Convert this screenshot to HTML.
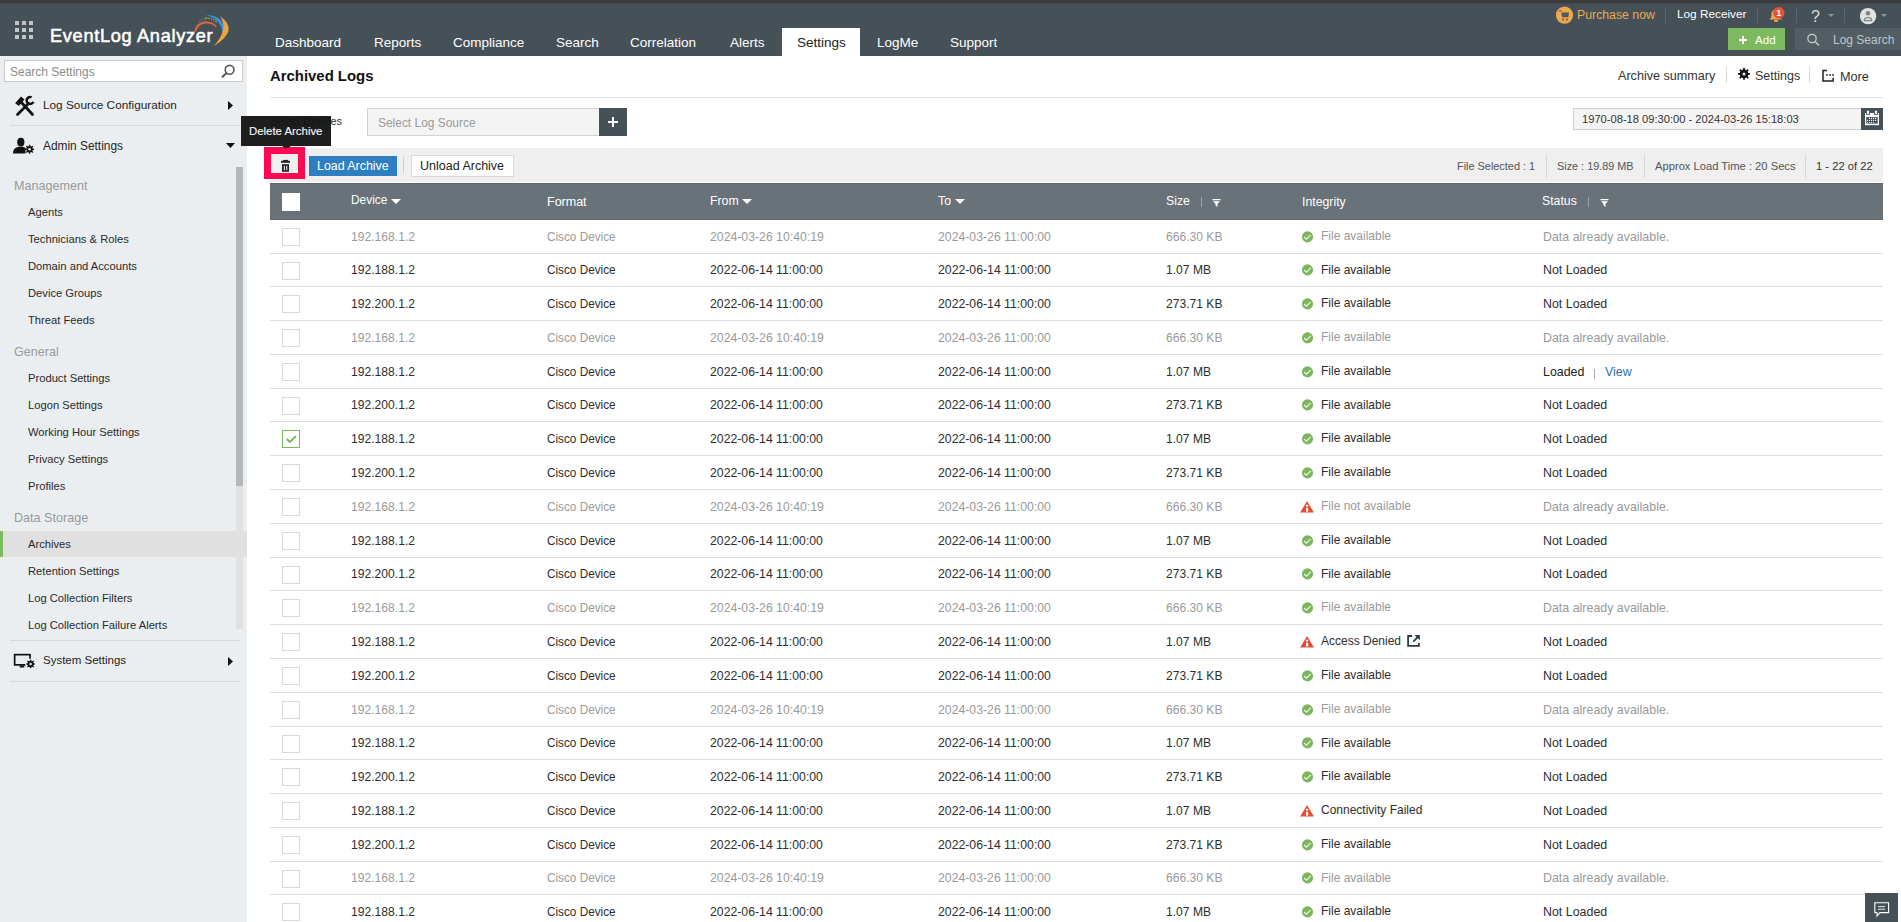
<!DOCTYPE html>
<html><head><meta charset="utf-8"><title>Archived Logs</title>
<style>
*{margin:0;padding:0;box-sizing:border-box}
html,body{width:1901px;height:922px;overflow:hidden}
body{position:relative;font-family:"Liberation Sans", sans-serif;background:#fff;color:#222}
.a{position:absolute;white-space:nowrap;line-height:1}
svg.a{overflow:visible}
</style></head><body>
<div class="a" style="left:0px;top:0px;width:1901px;height:3px;background:#3b3b3b;"></div>
<div class="a" style="left:0px;top:3px;width:1901px;height:53px;background:#465057;"></div>
<div class="a" style="left:0px;top:3px;width:1901px;height:1px;background:#42484c;"></div>
<div class="a" style="left:15px;top:21px;width:4px;height:4px;background:#c1c5c8;"></div>
<div class="a" style="left:15px;top:28px;width:4px;height:4px;background:#c1c5c8;"></div>
<div class="a" style="left:15px;top:35px;width:4px;height:4px;background:#c1c5c8;"></div>
<div class="a" style="left:22px;top:21px;width:4px;height:4px;background:#c1c5c8;"></div>
<div class="a" style="left:22px;top:28px;width:4px;height:4px;background:#c1c5c8;"></div>
<div class="a" style="left:22px;top:35px;width:4px;height:4px;background:#c1c5c8;"></div>
<div class="a" style="left:29px;top:21px;width:4px;height:4px;background:#c1c5c8;"></div>
<div class="a" style="left:29px;top:28px;width:4px;height:4px;background:#c1c5c8;"></div>
<div class="a" style="left:29px;top:35px;width:4px;height:4px;background:#c1c5c8;"></div>
<div class="a" style="left:50px;top:26.59px;font-size:18.2px;color:#ffffff;font-weight:normal;letter-spacing:0.68px;-webkit-text-stroke:0.55px #fff">EventLog Analyzer</div>
<svg class="a" style="left:185px;top:8px;" width="50" height="44" viewBox="0 0 50 44"><path d="M9 23.5 Q11 13.5 21 13.2 Q28.5 13.5 31.8 18.5 L30.8 19.5 Q27.5 15.5 21 15.6 Q13 16 10.8 24 Z" fill="#d9663f"/><path d="M13 14 Q17 10 23 9.8" fill="none" stroke="#6b7378" stroke-width="0.8"/><path d="M20.3 10.3 Q28 9.8 32.5 15" fill="none" stroke="#8bc34a" stroke-width="1.3" stroke-dasharray="1.3 1.4"/><path d="M21 7 Q44 8 37.5 30 Q39 12 21 7 Z" fill="#3b93d8"/><path d="M35 8.3 Q55 22 29 38 Q44 21 35 8.3 Z" fill="#eaa644"/></svg>
<div class="a" style="left:782px;top:28px;width:78px;height:28px;background:#ffffff;"></div>
<div class="a" style="left:275px;top:35.57px;font-size:13.5px;color:#ffffff;font-weight:normal;">Dashboard</div>
<div class="a" style="left:374px;top:35.57px;font-size:13.5px;color:#ffffff;font-weight:normal;">Reports</div>
<div class="a" style="left:453px;top:35.57px;font-size:13.5px;color:#ffffff;font-weight:normal;">Compliance</div>
<div class="a" style="left:556px;top:35.57px;font-size:13.5px;color:#ffffff;font-weight:normal;">Search</div>
<div class="a" style="left:630px;top:35.57px;font-size:13.5px;color:#ffffff;font-weight:normal;">Correlation</div>
<div class="a" style="left:730px;top:35.57px;font-size:13.5px;color:#ffffff;font-weight:normal;">Alerts</div>
<div class="a" style="left:797px;top:35.57px;font-size:13.5px;color:#222;font-weight:normal;">Settings</div>
<div class="a" style="left:877px;top:35.57px;font-size:13.5px;color:#ffffff;font-weight:normal;">LogMe</div>
<div class="a" style="left:950px;top:35.57px;font-size:13.5px;color:#ffffff;font-weight:normal;">Support</div>
<svg class="a" style="left:1556px;top:6.3px;" width="18" height="18" viewBox="0 0 18 18"><circle cx="8.5" cy="9.1" r="8.65" fill="#e8a94f"/><rect x="3" y="4.5" width="2.8" height="0.9" fill="#465057"/><path d="M5.3 6.6 H12.9 L12.3 11.3 H6.2 Z" fill="#4f5960"/><rect x="6.1" y="12.7" width="1.7" height="1.7" fill="#8a4a30"/><rect x="10" y="12.7" width="1.7" height="1.7" fill="#8a4a30"/></svg>
<div class="a" style="left:1577px;top:8.59px;font-size:12.3px;color:#e8a94f;font-weight:normal;">Purchase now</div>
<div class="a" style="left:1665px;top:7px;width:1px;height:16px;background:#5a646b;"></div>
<div class="a" style="left:1757px;top:7px;width:1px;height:16px;background:#5a646b;"></div>
<div class="a" style="left:1796px;top:7px;width:1px;height:16px;background:#5a646b;"></div>
<div class="a" style="left:1844px;top:7px;width:1px;height:16px;background:#5a646b;"></div>
<div class="a" style="left:1677px;top:9.01px;font-size:11.8px;color:#ffffff;font-weight:normal;">Log Receiver</div>
<svg class="a" style="left:1767px;top:5px;" width="20" height="18" viewBox="0 0 20 18"><path d="M2 14.5 Q4.5 13.5 4.5 9 Q4.5 5 8.5 4.5 Q12.5 5 12.5 9 Q12.5 13.5 15 14.5 Z" fill="#e8a94f"/><rect x="7" y="15" width="4" height="1.8" fill="#e8a94f"/><circle cx="11.8" cy="7.8" r="5.8" fill="#e5533d"/><text x="11.8" y="10.8" font-size="8.5" font-weight="bold" fill="#fff" text-anchor="middle" font-family="Liberation Sans">1</text></svg>
<div class="a" style="left:1811px;top:9.26px;font-size:16px;color:#dedede;font-weight:normal;">?</div>
<svg class="a" style="left:1828px;top:14px;" width="6" height="4" viewBox="0 0 6 4"><path d="M0 0 L6 0 L3 3 Z" fill="#8c959b"/></svg>
<svg class="a" style="left:1859px;top:7px;" width="18" height="18" viewBox="0 0 18 18"><circle cx="9.1" cy="9.1" r="8.2" fill="#e2e2e2"/><circle cx="9" cy="6.3" r="2.3" fill="#7d8489"/><path d="M5.3 13.6 Q5.3 10.6 9 10.6 Q12.7 10.6 12.7 13.6 Z" fill="none" stroke="#7d8489" stroke-width="1.3"/></svg>
<svg class="a" style="left:1881px;top:14px;" width="6" height="4" viewBox="0 0 6 4"><path d="M0 0 L6 0 L3 3 Z" fill="#8c959b"/></svg>
<div class="a" style="left:1728px;top:28px;width:57px;height:22px;background:#7db95e;"></div>
<svg class="a" style="left:1738px;top:35px;" width="10" height="10" viewBox="0 0 10 10"><path d="M5 1 V9 M1 5 H9" stroke="#fff" stroke-width="1.8"/></svg>
<div class="a" style="left:1755px;top:34.18px;font-size:11.6px;color:#ffffff;font-weight:normal;">Add</div>
<div class="a" style="left:1795px;top:28px;width:106px;height:22px;background:#535d64;"></div>
<svg class="a" style="left:1806px;top:33px;" width="15" height="14" viewBox="0 0 15 14"><circle cx="6" cy="5.5" r="4.2" fill="none" stroke="#c5cacd" stroke-width="1.3"/><path d="M9 8.5 L13 12.5" stroke="#c5cacd" stroke-width="1.5"/></svg>
<div class="a" style="left:1833px;top:33.84px;font-size:12px;color:#bfc4c8;font-weight:normal;">Log Search</div>
<div class="a" style="left:0px;top:56px;width:247px;height:866px;background:#ebeef0;"></div>
<div class="a" style="left:4px;top:60px;width:239px;height:22px;background:#ffffff;border:1px solid #c9cbcd"></div>
<div class="a" style="left:10px;top:65.84px;font-size:12px;color:#8c8c8c;font-weight:normal;">Search Settings</div>
<svg class="a" style="left:220px;top:63px;" width="16" height="16" viewBox="0 0 16 16"><circle cx="9.6" cy="6.8" r="4.4" fill="none" stroke="#5a5a5a" stroke-width="1.6"/><path d="M6.4 10 L2.6 13.8" stroke="#5a5a5a" stroke-width="2" stroke-linecap="round"/></svg>
<svg class="a" style="left:14px;top:95px;" width="22" height="22" viewBox="0 0 22 22"><path d="M7.5 7.5 L18.5 19.5" stroke="#111" stroke-width="2.8" stroke-linecap="round"/><path d="M1.2 8.2 L7 1.5 L10.5 4.5 L4.8 11 Z" fill="#111"/><path d="M3.5 19.5 L14.5 8.5" stroke="#111" stroke-width="2.8" stroke-linecap="round"/><path d="M17.6 2.3 A3.5 3.5 0 1 0 19.4 6.8" fill="none" stroke="#111" stroke-width="2.5"/></svg>
<div class="a" style="left:43px;top:99.71px;font-size:11.8px;color:#1e1e1e;font-weight:normal;">Log Source Configuration</div>
<svg class="a" style="left:228px;top:101px;" width="5" height="9" viewBox="0 0 5 9"><path d="M0 0 L5 4.5 L0 9 Z" fill="#111"/></svg>
<div class="a" style="left:10px;top:125px;width:230px;height:1px;background:#d6dadd;"></div>
<svg class="a" style="left:12px;top:137px;" width="23" height="18" viewBox="0 0 23 18"><ellipse cx="8.8" cy="5.2" rx="3.6" ry="4.4" fill="#111"/><path d="M1 16.5 Q1 10.5 7 9.8 L10.5 9.8 Q12.5 10 13.5 11 L13.5 16.5 Z" fill="#111"/><path d="M20.82 11.59 L22.16 11.67 L22.16 12.93 L20.82 13.01 L20.38 14.08 L21.27 15.08 L20.38 15.97 L19.38 15.08 L18.31 15.52 L18.23 16.86 L16.97 16.86 L16.89 15.52 L15.82 15.08 L14.82 15.97 L13.93 15.08 L14.82 14.08 L14.38 13.01 L13.04 12.93 L13.04 11.67 L14.38 11.59 L14.82 10.52 L13.93 9.52 L14.82 8.63 L15.82 9.52 L16.89 9.08 L16.97 7.74 L18.23 7.74 L18.31 9.08 L19.38 9.52 L20.38 8.63 L21.27 9.52 L20.38 10.52 Z" fill="#111"/><circle cx="17.6" cy="12.3" r="1.2" fill="#ebeef0"/></svg>
<div class="a" style="left:43px;top:140.93px;font-size:11.9px;color:#1e1e1e;font-weight:normal;">Admin Settings</div>
<svg class="a" style="left:226px;top:143px;" width="9" height="5" viewBox="0 0 9 5"><path d="M0 0 L9 0 L4.5 5 Z" fill="#111"/></svg>
<div class="a" style="left:14px;top:179.83px;font-size:12.6px;color:#979a9c;font-weight:normal;">Management</div>
<div class="a" style="left:28px;top:206.52px;font-size:11.2px;color:#2a2a2a;font-weight:normal;">Agents</div>
<div class="a" style="left:28px;top:233.52px;font-size:11.2px;color:#2a2a2a;font-weight:normal;">Technicians &amp; Roles</div>
<div class="a" style="left:28px;top:260.52px;font-size:11.2px;color:#2a2a2a;font-weight:normal;">Domain and Accounts</div>
<div class="a" style="left:28px;top:287.52px;font-size:11.2px;color:#2a2a2a;font-weight:normal;">Device Groups</div>
<div class="a" style="left:28px;top:314.52px;font-size:11.2px;color:#2a2a2a;font-weight:normal;">Threat Feeds</div>
<div class="a" style="left:14px;top:345.83px;font-size:12.6px;color:#979a9c;font-weight:normal;">General</div>
<div class="a" style="left:28px;top:372.52px;font-size:11.2px;color:#2a2a2a;font-weight:normal;">Product Settings</div>
<div class="a" style="left:28px;top:399.52px;font-size:11.2px;color:#2a2a2a;font-weight:normal;">Logon Settings</div>
<div class="a" style="left:28px;top:426.52px;font-size:11.2px;color:#2a2a2a;font-weight:normal;">Working Hour Settings</div>
<div class="a" style="left:28px;top:453.52px;font-size:11.2px;color:#2a2a2a;font-weight:normal;">Privacy Settings</div>
<div class="a" style="left:28px;top:480.52px;font-size:11.2px;color:#2a2a2a;font-weight:normal;">Profiles</div>
<div class="a" style="left:14px;top:511.83px;font-size:12.6px;color:#979a9c;font-weight:normal;">Data Storage</div>
<div class="a" style="left:0px;top:531px;width:247px;height:26px;background:#e0e0e0;"></div>
<div class="a" style="left:0px;top:531px;width:3px;height:26px;background:#7db95e;"></div>
<div class="a" style="left:28px;top:538.52px;font-size:11.2px;color:#2a2a2a;font-weight:normal;">Archives</div>
<div class="a" style="left:28px;top:565.52px;font-size:11.2px;color:#2a2a2a;font-weight:normal;">Retention Settings</div>
<div class="a" style="left:28px;top:592.52px;font-size:11.2px;color:#2a2a2a;font-weight:normal;">Log Collection Filters</div>
<div class="a" style="left:28px;top:619.52px;font-size:11.2px;color:#2a2a2a;font-weight:normal;">Log Collection Failure Alerts</div>
<div class="a" style="left:236px;top:167px;width:7px;height:462px;background:#e1e1e1;"></div>
<div class="a" style="left:236px;top:167px;width:7px;height:319px;background:#b4b8ba;"></div>
<div class="a" style="left:10px;top:640px;width:230px;height:1px;background:#d6dadd;"></div>
<svg class="a" style="left:13px;top:652px;" width="24" height="18" viewBox="0 0 24 18"><rect x="1.65" y="2.65" width="15.4" height="10.2" fill="none" stroke="#111" stroke-width="1.7"/><rect x="6.7" y="13.5" width="4.6" height="2" fill="#111"/><circle cx="17.6" cy="12" r="5.4" fill="#ebeef0"/><path d="M20.73 11.31 L21.96 11.40 L21.96 12.60 L20.73 12.69 L20.30 13.73 L21.11 14.66 L20.26 15.51 L19.33 14.70 L18.29 15.13 L18.20 16.36 L17.00 16.36 L16.91 15.13 L15.87 14.70 L14.94 15.51 L14.09 14.66 L14.90 13.73 L14.47 12.69 L13.24 12.60 L13.24 11.40 L14.47 11.31 L14.90 10.27 L14.09 9.34 L14.94 8.49 L15.87 9.30 L16.91 8.87 L17.00 7.64 L18.20 7.64 L18.29 8.87 L19.33 9.30 L20.26 8.49 L21.11 9.34 L20.30 10.27 Z" fill="#111"/><circle cx="17.6" cy="12" r="1.2" fill="#ebeef0"/></svg>
<div class="a" style="left:43px;top:655.27px;font-size:11.5px;color:#1e1e1e;font-weight:normal;">System Settings</div>
<svg class="a" style="left:228px;top:657px;" width="5" height="9" viewBox="0 0 5 9"><path d="M0 0 L5 4.5 L0 9 Z" fill="#111"/></svg>
<div class="a" style="left:10px;top:681px;width:230px;height:1px;background:#d6dadd;"></div>
<div class="a" style="left:270px;top:69.39px;font-size:14.9px;color:#111;font-weight:bold;">Archived Logs</div>
<div class="a" style="left:270px;top:97px;width:1613px;height:1px;background:#e3e3e3;"></div>
<div class="a" style="left:1618px;top:70.33px;font-size:12.6px;color:#333;font-weight:normal;">Archive summary</div>
<div class="a" style="left:1726px;top:66px;width:1px;height:17px;background:#d8d8d8;"></div>
<svg class="a" style="left:1737px;top:67px;" width="14" height="14" viewBox="0 0 14 14"><path d="M11.30 5.96 L12.94 6.08 L12.94 7.72 L11.30 7.84 L10.71 9.27 L11.78 10.52 L10.62 11.68 L9.37 10.61 L7.94 11.20 L7.82 12.84 L6.18 12.84 L6.06 11.20 L4.63 10.61 L3.38 11.68 L2.22 10.52 L3.29 9.27 L2.70 7.84 L1.06 7.72 L1.06 6.08 L2.70 5.96 L3.29 4.53 L2.22 3.28 L3.38 2.12 L4.63 3.19 L6.06 2.60 L6.18 0.96 L7.82 0.96 L7.94 2.60 L9.37 3.19 L10.62 2.12 L11.78 3.28 L10.71 4.53 Z" fill="#111"/><circle cx="7" cy="6.9" r="1.5" fill="#fff"/></svg>
<div class="a" style="left:1755px;top:70.42px;font-size:12.5px;color:#333;font-weight:normal;">Settings</div>
<div class="a" style="left:1809px;top:66px;width:1px;height:17px;background:#d8d8d8;"></div>
<svg class="a" style="left:1821px;top:69px;" width="14" height="14" viewBox="0 0 14 14"><path d="M6 1.6 H2 V11.9 H12.1 V8.7" fill="none" stroke="#222" stroke-width="1.5"/><rect x="5.2" y="5.1" width="1.6" height="1.6" fill="#222"/><rect x="8.2" y="5.1" width="1.6" height="1.6" fill="#222"/><rect x="11.2" y="5.1" width="1.6" height="1.6" fill="#222"/></svg>
<div class="a" style="left:1840px;top:71.05px;font-size:12.7px;color:#333;font-weight:normal;">More</div>
<div class="a" style="left:270px;top:116.27px;font-size:10.9px;color:#333;font-weight:normal;">Select Devices</div>
<div class="a" style="left:367px;top:108px;width:233px;height:28px;background:#f4f4f4;border:1px solid #d2d2d2"></div>
<div class="a" style="left:378px;top:117.88px;font-size:11.95px;color:#9a9a9a;font-weight:normal;">Select Log Source</div>
<div class="a" style="left:599px;top:108px;width:28px;height:28px;background:#465057;"></div>
<svg class="a" style="left:606px;top:115px;" width="14" height="14" viewBox="0 0 14 14"><path d="M7 2 V12 M2 7 H12" stroke="#fff" stroke-width="2"/></svg>
<div class="a" style="left:1573px;top:108px;width:289px;height:22px;background:#f4f4f4;border:1px solid #cfcfcf"></div>
<div class="a" style="left:1582px;top:113.56px;font-size:11.15px;color:#333;font-weight:normal;">1970-08-18 09:30:00 - 2024-03-26 15:18:03</div>
<div class="a" style="left:1861px;top:108px;width:22px;height:22px;background:#465057;"></div>
<svg class="a" style="left:1864px;top:111px;" width="17" height="15" viewBox="0 0 17 15"><rect x="1" y="2" width="14" height="12.2" fill="#fff"/><rect x="2.2" y="6.1" width="11.5" height="6.5" fill="#465057"/><rect x="2" y="1" width="4" height="2.8" fill="#465057"/><rect x="10" y="1" width="4" height="2.8" fill="#465057"/><rect x="2.9" y="-0.2" width="2.2" height="3.1" fill="#fff"/><rect x="10.9" y="-0.2" width="2.2" height="3.1" fill="#fff"/><circle cx="5.5" cy="7.4" r="0.6" fill="#fff"/><circle cx="7.5" cy="7.4" r="0.6" fill="#fff"/><circle cx="9.5" cy="7.4" r="0.6" fill="#fff"/><circle cx="11.6" cy="7.4" r="0.6" fill="#fff"/><circle cx="3.4" cy="9.4" r="0.6" fill="#fff"/><circle cx="5.5" cy="9.4" r="0.6" fill="#fff"/><circle cx="7.5" cy="9.4" r="0.6" fill="#fff"/><circle cx="9.5" cy="9.4" r="0.6" fill="#fff"/><circle cx="11.6" cy="9.4" r="0.6" fill="#fff"/><circle cx="3.4" cy="11.5" r="0.6" fill="#fff"/><circle cx="5.5" cy="11.5" r="0.6" fill="#fff"/><circle cx="7.5" cy="11.5" r="0.6" fill="#fff"/><circle cx="9.5" cy="11.5" r="0.6" fill="#fff"/></svg>
<div class="a" style="left:270px;top:148px;width:1613px;height:34px;background:#efefef;"></div>
<div class="a" style="left:264px;top:147px;width:41px;height:32px;background:#ff0a52;"></div>
<div class="a" style="left:271px;top:154px;width:27px;height:19px;background:#efefef;"></div>
<svg class="a" style="left:280px;top:158px;" width="12" height="15" viewBox="0 0 12 15"><rect x="3.2" y="1.9" width="4.8" height="1.3" fill="#222"/><rect x="1" y="2.8" width="9" height="2" fill="#222"/><rect x="2" y="6.2" width="7" height="7.6" fill="#222"/><rect x="3.8" y="7.8" width="1.1" height="4.4" fill="#eee"/><rect x="6.2" y="7.8" width="1.1" height="4.4" fill="#eee"/></svg>
<div class="a" style="left:309px;top:156px;width:88px;height:20px;background:#2e7fc2;"></div>
<div class="a" style="left:317px;top:159.50px;font-size:12.4px;color:#ffffff;font-weight:normal;">Load Archive</div>
<div class="a" style="left:403px;top:157px;width:1px;height:16px;background:#cfcfcf;"></div>
<div class="a" style="left:411px;top:155px;width:103px;height:22px;background:#ffffff;border:1px solid #d9d9d9"></div>
<div class="a" style="left:420px;top:160.22px;font-size:12.5px;color:#222;font-weight:normal;">Unload Archive</div>
<div class="a" style="left:1457px;top:160.77px;font-size:10.9px;color:#555;font-weight:normal;">File Selected : 1</div>
<div class="a" style="left:1546px;top:155px;width:1px;height:23px;background:#d6d6d6;"></div>
<div class="a" style="left:1557px;top:160.82px;font-size:10.85px;color:#555;font-weight:normal;">Size : 19.89 MB</div>
<div class="a" style="left:1644px;top:155px;width:1px;height:23px;background:#d6d6d6;"></div>
<div class="a" style="left:1655px;top:160.52px;font-size:11.2px;color:#555;font-weight:normal;">Approx Load Time : 20 Secs</div>
<div class="a" style="left:1805px;top:155px;width:1px;height:23px;background:#d6d6d6;"></div>
<div class="a" style="left:1816px;top:160.52px;font-size:11.2px;color:#333;font-weight:normal;">1 - 22 of 22</div>
<div class="a" style="left:241px;top:116px;width:90px;height:30px;background:rgba(18,18,18,0.95);"></div>
<svg class="a" style="left:282px;top:146px;" width="9" height="3" viewBox="0 0 9 3"><path d="M0 0 L9 0 Q6.5 2.2 4.5 2.2 Q2.5 2.2 0 0 Z" fill="rgba(18,18,18,0.95)"/></svg>
<div class="a" style="left:249px;top:126.15px;font-size:11.4px;color:#f4f4f4;font-weight:normal;-webkit-text-stroke:0.12px #fff">Delete Archive</div>
<div class="a" style="left:270px;top:183px;width:1613px;height:37px;background:#687278;border-top:1px solid #5b666d;border-bottom:1px solid #5b666d"></div>
<div class="a" style="left:282px;top:193px;width:18px;height:18px;background:#ffffff;"></div>
<div class="a" style="left:351px;top:194.93px;font-size:11.9px;color:#fff;font-weight:normal;">Device</div>
<svg class="a" style="left:391px;top:199px;" width="10" height="5" viewBox="0 0 10 5"><path d="M0 0 L10 0 L5 5 Z" fill="#fff"/></svg>
<div class="a" style="left:547px;top:195.92px;font-size:12.5px;color:#fff;font-weight:normal;">Format</div>
<div class="a" style="left:710px;top:194.59px;font-size:12.3px;color:#fff;font-weight:normal;">From</div>
<svg class="a" style="left:742px;top:199px;" width="10" height="5" viewBox="0 0 10 5"><path d="M0 0 L10 0 L5 5 Z" fill="#fff"/></svg>
<div class="a" style="left:938px;top:194.59px;font-size:12.3px;color:#fff;font-weight:normal;">To</div>
<svg class="a" style="left:955px;top:199px;" width="10" height="5" viewBox="0 0 10 5"><path d="M0 0 L10 0 L5 5 Z" fill="#fff"/></svg>
<div class="a" style="left:1166px;top:194.59px;font-size:12.3px;color:#fff;font-weight:normal;">Size</div>
<div class="a" style="left:1201px;top:197px;width:1px;height:10px;background:#9aa2a7;"></div>
<svg class="a" style="left:1212px;top:198px;" width="9" height="9" viewBox="0 0 9 9"><path d="M0.5 1 H8.5 V2.2 H0.5 Z M1 3.2 H8 L5.5 5.8 V9 L3.5 7.5 V5.8 Z" fill="#fff"/></svg>
<div class="a" style="left:1302px;top:196.09px;font-size:12.3px;color:#fff;font-weight:normal;">Integrity</div>
<div class="a" style="left:1542px;top:194.59px;font-size:12.3px;color:#fff;font-weight:normal;">Status</div>
<div class="a" style="left:1588px;top:197px;width:1px;height:10px;background:#9aa2a7;"></div>
<svg class="a" style="left:1600px;top:198px;" width="9" height="9" viewBox="0 0 9 9"><path d="M0.5 1 H8.5 V2.2 H0.5 Z M1 3.2 H8 L5.5 5.8 V9 L3.5 7.5 V5.8 Z" fill="#fff"/></svg>
<div class="a" style="left:270px;top:253px;width:1613px;height:1px;background:#dedede;"></div>
<div class="a" style="left:282px;top:228.00px;width:18px;height:18px;background:#fff;border:1px solid #d9d9d9"></div>
<div class="a" style="left:351px;top:229.50px;font-size:13px;color:#9a9a9a;font-weight:normal;transform:scaleX(0.932);transform-origin:0 0;">192.168.1.2</div>
<div class="a" style="left:547px;top:229.50px;font-size:13px;color:#9a9a9a;font-weight:normal;transform:scaleX(0.904);transform-origin:0 0;">Cisco Device</div>
<div class="a" style="left:710px;top:229.50px;font-size:13px;color:#9a9a9a;font-weight:normal;transform:scaleX(0.943);transform-origin:0 0;">2024-03-26 10:40:19</div>
<div class="a" style="left:938px;top:229.50px;font-size:13px;color:#9a9a9a;font-weight:normal;transform:scaleX(0.943);transform-origin:0 0;">2024-03-26 11:00:00</div>
<div class="a" style="left:1166px;top:229.50px;font-size:13px;color:#9a9a9a;font-weight:normal;transform:scaleX(0.93);transform-origin:0 0;">666.30 KB</div>
<svg class="a" style="left:1301px;top:230.50px;" width="13" height="12" viewBox="0 0 13 12"><circle cx="6.5" cy="5.9" r="5.55" fill="#7cb65a"/><path d="M3.1 6 L5.4 8.1 L9.8 3.8" fill="none" stroke="#f4f4f4" stroke-width="1.15"/></svg>
<div class="a" style="left:1321px;top:229.30px;font-size:13px;color:#9a9a9a;font-weight:normal;transform:scaleX(0.923);transform-origin:0 0;">File available</div>
<div class="a" style="left:1543px;top:229.50px;font-size:13px;color:#9a9a9a;font-weight:normal;transform:scaleX(0.955);transform-origin:0 0;">Data already available.</div>
<div class="a" style="left:270px;top:286px;width:1613px;height:1px;background:#dedede;"></div>
<div class="a" style="left:282px;top:262.00px;width:18px;height:18px;background:#fff;border:1px solid #d9d9d9"></div>
<div class="a" style="left:351px;top:263.00px;font-size:13px;color:#2e2e2e;font-weight:normal;transform:scaleX(0.932);transform-origin:0 0;">192.188.1.2</div>
<div class="a" style="left:547px;top:263.00px;font-size:13px;color:#2e2e2e;font-weight:normal;transform:scaleX(0.904);transform-origin:0 0;">Cisco Device</div>
<div class="a" style="left:710px;top:263.00px;font-size:13px;color:#2e2e2e;font-weight:normal;transform:scaleX(0.943);transform-origin:0 0;">2022-06-14 11:00:00</div>
<div class="a" style="left:938px;top:263.00px;font-size:13px;color:#2e2e2e;font-weight:normal;transform:scaleX(0.943);transform-origin:0 0;">2022-06-14 11:00:00</div>
<div class="a" style="left:1166px;top:263.00px;font-size:13px;color:#2e2e2e;font-weight:normal;transform:scaleX(0.93);transform-origin:0 0;">1.07 MB</div>
<svg class="a" style="left:1301px;top:264.00px;" width="13" height="12" viewBox="0 0 13 12"><circle cx="6.5" cy="5.9" r="5.55" fill="#7cb65a"/><path d="M3.1 6 L5.4 8.1 L9.8 3.8" fill="none" stroke="#f4f4f4" stroke-width="1.15"/></svg>
<div class="a" style="left:1321px;top:262.80px;font-size:13px;color:#2e2e2e;font-weight:normal;transform:scaleX(0.923);transform-origin:0 0;">File available</div>
<div class="a" style="left:1543px;top:263.00px;font-size:13px;color:#2e2e2e;font-weight:normal;transform:scaleX(0.955);transform-origin:0 0;">Not Loaded</div>
<div class="a" style="left:270px;top:320px;width:1613px;height:1px;background:#dedede;"></div>
<div class="a" style="left:282px;top:295.00px;width:18px;height:18px;background:#fff;border:1px solid #d9d9d9"></div>
<div class="a" style="left:351px;top:296.50px;font-size:13px;color:#2e2e2e;font-weight:normal;transform:scaleX(0.932);transform-origin:0 0;">192.200.1.2</div>
<div class="a" style="left:547px;top:296.50px;font-size:13px;color:#2e2e2e;font-weight:normal;transform:scaleX(0.904);transform-origin:0 0;">Cisco Device</div>
<div class="a" style="left:710px;top:296.50px;font-size:13px;color:#2e2e2e;font-weight:normal;transform:scaleX(0.943);transform-origin:0 0;">2022-06-14 11:00:00</div>
<div class="a" style="left:938px;top:296.50px;font-size:13px;color:#2e2e2e;font-weight:normal;transform:scaleX(0.943);transform-origin:0 0;">2022-06-14 11:00:00</div>
<div class="a" style="left:1166px;top:296.50px;font-size:13px;color:#2e2e2e;font-weight:normal;transform:scaleX(0.93);transform-origin:0 0;">273.71 KB</div>
<svg class="a" style="left:1301px;top:297.50px;" width="13" height="12" viewBox="0 0 13 12"><circle cx="6.5" cy="5.9" r="5.55" fill="#7cb65a"/><path d="M3.1 6 L5.4 8.1 L9.8 3.8" fill="none" stroke="#f4f4f4" stroke-width="1.15"/></svg>
<div class="a" style="left:1321px;top:296.30px;font-size:13px;color:#2e2e2e;font-weight:normal;transform:scaleX(0.923);transform-origin:0 0;">File available</div>
<div class="a" style="left:1543px;top:296.50px;font-size:13px;color:#2e2e2e;font-weight:normal;transform:scaleX(0.955);transform-origin:0 0;">Not Loaded</div>
<div class="a" style="left:270px;top:354px;width:1613px;height:1px;background:#dedede;"></div>
<div class="a" style="left:282px;top:329.00px;width:18px;height:18px;background:#fff;border:1px solid #d9d9d9"></div>
<div class="a" style="left:351px;top:330.50px;font-size:13px;color:#9a9a9a;font-weight:normal;transform:scaleX(0.932);transform-origin:0 0;">192.168.1.2</div>
<div class="a" style="left:547px;top:330.50px;font-size:13px;color:#9a9a9a;font-weight:normal;transform:scaleX(0.904);transform-origin:0 0;">Cisco Device</div>
<div class="a" style="left:710px;top:330.50px;font-size:13px;color:#9a9a9a;font-weight:normal;transform:scaleX(0.943);transform-origin:0 0;">2024-03-26 10:40:19</div>
<div class="a" style="left:938px;top:330.50px;font-size:13px;color:#9a9a9a;font-weight:normal;transform:scaleX(0.943);transform-origin:0 0;">2024-03-26 11:00:00</div>
<div class="a" style="left:1166px;top:330.50px;font-size:13px;color:#9a9a9a;font-weight:normal;transform:scaleX(0.93);transform-origin:0 0;">666.30 KB</div>
<svg class="a" style="left:1301px;top:331.50px;" width="13" height="12" viewBox="0 0 13 12"><circle cx="6.5" cy="5.9" r="5.55" fill="#7cb65a"/><path d="M3.1 6 L5.4 8.1 L9.8 3.8" fill="none" stroke="#f4f4f4" stroke-width="1.15"/></svg>
<div class="a" style="left:1321px;top:330.30px;font-size:13px;color:#9a9a9a;font-weight:normal;transform:scaleX(0.923);transform-origin:0 0;">File available</div>
<div class="a" style="left:1543px;top:330.50px;font-size:13px;color:#9a9a9a;font-weight:normal;transform:scaleX(0.955);transform-origin:0 0;">Data already available.</div>
<div class="a" style="left:270px;top:388px;width:1613px;height:1px;background:#dedede;"></div>
<div class="a" style="left:282px;top:363.00px;width:18px;height:18px;background:#fff;border:1px solid #d9d9d9"></div>
<div class="a" style="left:351px;top:364.50px;font-size:13px;color:#2e2e2e;font-weight:normal;transform:scaleX(0.932);transform-origin:0 0;">192.188.1.2</div>
<div class="a" style="left:547px;top:364.50px;font-size:13px;color:#2e2e2e;font-weight:normal;transform:scaleX(0.904);transform-origin:0 0;">Cisco Device</div>
<div class="a" style="left:710px;top:364.50px;font-size:13px;color:#2e2e2e;font-weight:normal;transform:scaleX(0.943);transform-origin:0 0;">2022-06-14 11:00:00</div>
<div class="a" style="left:938px;top:364.50px;font-size:13px;color:#2e2e2e;font-weight:normal;transform:scaleX(0.943);transform-origin:0 0;">2022-06-14 11:00:00</div>
<div class="a" style="left:1166px;top:364.50px;font-size:13px;color:#2e2e2e;font-weight:normal;transform:scaleX(0.93);transform-origin:0 0;">1.07 MB</div>
<svg class="a" style="left:1301px;top:365.50px;" width="13" height="12" viewBox="0 0 13 12"><circle cx="6.5" cy="5.9" r="5.55" fill="#7cb65a"/><path d="M3.1 6 L5.4 8.1 L9.8 3.8" fill="none" stroke="#f4f4f4" stroke-width="1.15"/></svg>
<div class="a" style="left:1321px;top:364.30px;font-size:13px;color:#2e2e2e;font-weight:normal;transform:scaleX(0.923);transform-origin:0 0;">File available</div>
<div class="a" style="left:1543px;top:365.80px;font-size:12.4px;color:#222;font-weight:normal;">Loaded</div>
<div class="a" style="left:1594px;top:368.50px;width:1px;height:10px;background:#aaa;"></div>
<div class="a" style="left:1605px;top:365.80px;font-size:12.4px;color:#2e6fa8;font-weight:normal;">View</div>
<div class="a" style="left:270px;top:421px;width:1613px;height:1px;background:#dedede;"></div>
<div class="a" style="left:282px;top:397.00px;width:18px;height:18px;background:#fff;border:1px solid #d9d9d9"></div>
<div class="a" style="left:351px;top:398.00px;font-size:13px;color:#2e2e2e;font-weight:normal;transform:scaleX(0.932);transform-origin:0 0;">192.200.1.2</div>
<div class="a" style="left:547px;top:398.00px;font-size:13px;color:#2e2e2e;font-weight:normal;transform:scaleX(0.904);transform-origin:0 0;">Cisco Device</div>
<div class="a" style="left:710px;top:398.00px;font-size:13px;color:#2e2e2e;font-weight:normal;transform:scaleX(0.943);transform-origin:0 0;">2022-06-14 11:00:00</div>
<div class="a" style="left:938px;top:398.00px;font-size:13px;color:#2e2e2e;font-weight:normal;transform:scaleX(0.943);transform-origin:0 0;">2022-06-14 11:00:00</div>
<div class="a" style="left:1166px;top:398.00px;font-size:13px;color:#2e2e2e;font-weight:normal;transform:scaleX(0.93);transform-origin:0 0;">273.71 KB</div>
<svg class="a" style="left:1301px;top:399.00px;" width="13" height="12" viewBox="0 0 13 12"><circle cx="6.5" cy="5.9" r="5.55" fill="#7cb65a"/><path d="M3.1 6 L5.4 8.1 L9.8 3.8" fill="none" stroke="#f4f4f4" stroke-width="1.15"/></svg>
<div class="a" style="left:1321px;top:397.80px;font-size:13px;color:#2e2e2e;font-weight:normal;transform:scaleX(0.923);transform-origin:0 0;">File available</div>
<div class="a" style="left:1543px;top:398.00px;font-size:13px;color:#2e2e2e;font-weight:normal;transform:scaleX(0.955);transform-origin:0 0;">Not Loaded</div>
<div class="a" style="left:270px;top:455px;width:1613px;height:1px;background:#dedede;"></div>
<div class="a" style="left:282px;top:430.00px;width:18px;height:18px;background:#fff;border:1px solid #7cb85d"></div>
<svg class="a" style="left:285px;top:434.00px;" width="12" height="10" viewBox="0 0 12 10"><path d="M1.7 5 L4.9 8 L11 2.1" fill="none" stroke="#76b655" stroke-width="1.9"/></svg>
<div class="a" style="left:351px;top:431.50px;font-size:13px;color:#2e2e2e;font-weight:normal;transform:scaleX(0.932);transform-origin:0 0;">192.188.1.2</div>
<div class="a" style="left:547px;top:431.50px;font-size:13px;color:#2e2e2e;font-weight:normal;transform:scaleX(0.904);transform-origin:0 0;">Cisco Device</div>
<div class="a" style="left:710px;top:431.50px;font-size:13px;color:#2e2e2e;font-weight:normal;transform:scaleX(0.943);transform-origin:0 0;">2022-06-14 11:00:00</div>
<div class="a" style="left:938px;top:431.50px;font-size:13px;color:#2e2e2e;font-weight:normal;transform:scaleX(0.943);transform-origin:0 0;">2022-06-14 11:00:00</div>
<div class="a" style="left:1166px;top:431.50px;font-size:13px;color:#2e2e2e;font-weight:normal;transform:scaleX(0.93);transform-origin:0 0;">1.07 MB</div>
<svg class="a" style="left:1301px;top:432.50px;" width="13" height="12" viewBox="0 0 13 12"><circle cx="6.5" cy="5.9" r="5.55" fill="#7cb65a"/><path d="M3.1 6 L5.4 8.1 L9.8 3.8" fill="none" stroke="#f4f4f4" stroke-width="1.15"/></svg>
<div class="a" style="left:1321px;top:431.30px;font-size:13px;color:#2e2e2e;font-weight:normal;transform:scaleX(0.923);transform-origin:0 0;">File available</div>
<div class="a" style="left:1543px;top:431.50px;font-size:13px;color:#2e2e2e;font-weight:normal;transform:scaleX(0.955);transform-origin:0 0;">Not Loaded</div>
<div class="a" style="left:270px;top:489px;width:1613px;height:1px;background:#dedede;"></div>
<div class="a" style="left:282px;top:464.00px;width:18px;height:18px;background:#fff;border:1px solid #d9d9d9"></div>
<div class="a" style="left:351px;top:465.50px;font-size:13px;color:#2e2e2e;font-weight:normal;transform:scaleX(0.932);transform-origin:0 0;">192.200.1.2</div>
<div class="a" style="left:547px;top:465.50px;font-size:13px;color:#2e2e2e;font-weight:normal;transform:scaleX(0.904);transform-origin:0 0;">Cisco Device</div>
<div class="a" style="left:710px;top:465.50px;font-size:13px;color:#2e2e2e;font-weight:normal;transform:scaleX(0.943);transform-origin:0 0;">2022-06-14 11:00:00</div>
<div class="a" style="left:938px;top:465.50px;font-size:13px;color:#2e2e2e;font-weight:normal;transform:scaleX(0.943);transform-origin:0 0;">2022-06-14 11:00:00</div>
<div class="a" style="left:1166px;top:465.50px;font-size:13px;color:#2e2e2e;font-weight:normal;transform:scaleX(0.93);transform-origin:0 0;">273.71 KB</div>
<svg class="a" style="left:1301px;top:466.50px;" width="13" height="12" viewBox="0 0 13 12"><circle cx="6.5" cy="5.9" r="5.55" fill="#7cb65a"/><path d="M3.1 6 L5.4 8.1 L9.8 3.8" fill="none" stroke="#f4f4f4" stroke-width="1.15"/></svg>
<div class="a" style="left:1321px;top:465.30px;font-size:13px;color:#2e2e2e;font-weight:normal;transform:scaleX(0.923);transform-origin:0 0;">File available</div>
<div class="a" style="left:1543px;top:465.50px;font-size:13px;color:#2e2e2e;font-weight:normal;transform:scaleX(0.955);transform-origin:0 0;">Not Loaded</div>
<div class="a" style="left:270px;top:523px;width:1613px;height:1px;background:#dedede;"></div>
<div class="a" style="left:282px;top:498.00px;width:18px;height:18px;background:#fff;border:1px solid #d9d9d9"></div>
<div class="a" style="left:351px;top:499.50px;font-size:13px;color:#9a9a9a;font-weight:normal;transform:scaleX(0.932);transform-origin:0 0;">192.168.1.2</div>
<div class="a" style="left:547px;top:499.50px;font-size:13px;color:#9a9a9a;font-weight:normal;transform:scaleX(0.904);transform-origin:0 0;">Cisco Device</div>
<div class="a" style="left:710px;top:499.50px;font-size:13px;color:#9a9a9a;font-weight:normal;transform:scaleX(0.943);transform-origin:0 0;">2024-03-26 10:40:19</div>
<div class="a" style="left:938px;top:499.50px;font-size:13px;color:#9a9a9a;font-weight:normal;transform:scaleX(0.943);transform-origin:0 0;">2024-03-26 11:00:00</div>
<div class="a" style="left:1166px;top:499.50px;font-size:13px;color:#9a9a9a;font-weight:normal;transform:scaleX(0.93);transform-origin:0 0;">666.30 KB</div>
<svg class="a" style="left:1299px;top:501.30px;" width="16" height="12" viewBox="0 0 16 12"><path d="M8.1 0 L14.9 11.5 H1.1 Z" fill="#e44d35"/><rect x="7.1" y="3.7" width="2" height="1.8" fill="#fff"/><rect x="7.1" y="6.7" width="2" height="3.9" fill="#fff"/></svg>
<div class="a" style="left:1321px;top:499.30px;font-size:13px;color:#9a9a9a;font-weight:normal;transform:scaleX(0.923);transform-origin:0 0;">File not available</div>
<div class="a" style="left:1543px;top:499.50px;font-size:13px;color:#9a9a9a;font-weight:normal;transform:scaleX(0.955);transform-origin:0 0;">Data already available.</div>
<div class="a" style="left:270px;top:557px;width:1613px;height:1px;background:#dedede;"></div>
<div class="a" style="left:282px;top:532.00px;width:18px;height:18px;background:#fff;border:1px solid #d9d9d9"></div>
<div class="a" style="left:351px;top:533.50px;font-size:13px;color:#2e2e2e;font-weight:normal;transform:scaleX(0.932);transform-origin:0 0;">192.188.1.2</div>
<div class="a" style="left:547px;top:533.50px;font-size:13px;color:#2e2e2e;font-weight:normal;transform:scaleX(0.904);transform-origin:0 0;">Cisco Device</div>
<div class="a" style="left:710px;top:533.50px;font-size:13px;color:#2e2e2e;font-weight:normal;transform:scaleX(0.943);transform-origin:0 0;">2022-06-14 11:00:00</div>
<div class="a" style="left:938px;top:533.50px;font-size:13px;color:#2e2e2e;font-weight:normal;transform:scaleX(0.943);transform-origin:0 0;">2022-06-14 11:00:00</div>
<div class="a" style="left:1166px;top:533.50px;font-size:13px;color:#2e2e2e;font-weight:normal;transform:scaleX(0.93);transform-origin:0 0;">1.07 MB</div>
<svg class="a" style="left:1301px;top:534.50px;" width="13" height="12" viewBox="0 0 13 12"><circle cx="6.5" cy="5.9" r="5.55" fill="#7cb65a"/><path d="M3.1 6 L5.4 8.1 L9.8 3.8" fill="none" stroke="#f4f4f4" stroke-width="1.15"/></svg>
<div class="a" style="left:1321px;top:533.30px;font-size:13px;color:#2e2e2e;font-weight:normal;transform:scaleX(0.923);transform-origin:0 0;">File available</div>
<div class="a" style="left:1543px;top:533.50px;font-size:13px;color:#2e2e2e;font-weight:normal;transform:scaleX(0.955);transform-origin:0 0;">Not Loaded</div>
<div class="a" style="left:270px;top:590px;width:1613px;height:1px;background:#dedede;"></div>
<div class="a" style="left:282px;top:566.00px;width:18px;height:18px;background:#fff;border:1px solid #d9d9d9"></div>
<div class="a" style="left:351px;top:567.00px;font-size:13px;color:#2e2e2e;font-weight:normal;transform:scaleX(0.932);transform-origin:0 0;">192.200.1.2</div>
<div class="a" style="left:547px;top:567.00px;font-size:13px;color:#2e2e2e;font-weight:normal;transform:scaleX(0.904);transform-origin:0 0;">Cisco Device</div>
<div class="a" style="left:710px;top:567.00px;font-size:13px;color:#2e2e2e;font-weight:normal;transform:scaleX(0.943);transform-origin:0 0;">2022-06-14 11:00:00</div>
<div class="a" style="left:938px;top:567.00px;font-size:13px;color:#2e2e2e;font-weight:normal;transform:scaleX(0.943);transform-origin:0 0;">2022-06-14 11:00:00</div>
<div class="a" style="left:1166px;top:567.00px;font-size:13px;color:#2e2e2e;font-weight:normal;transform:scaleX(0.93);transform-origin:0 0;">273.71 KB</div>
<svg class="a" style="left:1301px;top:568.00px;" width="13" height="12" viewBox="0 0 13 12"><circle cx="6.5" cy="5.9" r="5.55" fill="#7cb65a"/><path d="M3.1 6 L5.4 8.1 L9.8 3.8" fill="none" stroke="#f4f4f4" stroke-width="1.15"/></svg>
<div class="a" style="left:1321px;top:566.80px;font-size:13px;color:#2e2e2e;font-weight:normal;transform:scaleX(0.923);transform-origin:0 0;">File available</div>
<div class="a" style="left:1543px;top:567.00px;font-size:13px;color:#2e2e2e;font-weight:normal;transform:scaleX(0.955);transform-origin:0 0;">Not Loaded</div>
<div class="a" style="left:270px;top:624px;width:1613px;height:1px;background:#dedede;"></div>
<div class="a" style="left:282px;top:599.00px;width:18px;height:18px;background:#fff;border:1px solid #d9d9d9"></div>
<div class="a" style="left:351px;top:600.50px;font-size:13px;color:#9a9a9a;font-weight:normal;transform:scaleX(0.932);transform-origin:0 0;">192.168.1.2</div>
<div class="a" style="left:547px;top:600.50px;font-size:13px;color:#9a9a9a;font-weight:normal;transform:scaleX(0.904);transform-origin:0 0;">Cisco Device</div>
<div class="a" style="left:710px;top:600.50px;font-size:13px;color:#9a9a9a;font-weight:normal;transform:scaleX(0.943);transform-origin:0 0;">2024-03-26 10:40:19</div>
<div class="a" style="left:938px;top:600.50px;font-size:13px;color:#9a9a9a;font-weight:normal;transform:scaleX(0.943);transform-origin:0 0;">2024-03-26 11:00:00</div>
<div class="a" style="left:1166px;top:600.50px;font-size:13px;color:#9a9a9a;font-weight:normal;transform:scaleX(0.93);transform-origin:0 0;">666.30 KB</div>
<svg class="a" style="left:1301px;top:601.50px;" width="13" height="12" viewBox="0 0 13 12"><circle cx="6.5" cy="5.9" r="5.55" fill="#7cb65a"/><path d="M3.1 6 L5.4 8.1 L9.8 3.8" fill="none" stroke="#f4f4f4" stroke-width="1.15"/></svg>
<div class="a" style="left:1321px;top:600.30px;font-size:13px;color:#9a9a9a;font-weight:normal;transform:scaleX(0.923);transform-origin:0 0;">File available</div>
<div class="a" style="left:1543px;top:600.50px;font-size:13px;color:#9a9a9a;font-weight:normal;transform:scaleX(0.955);transform-origin:0 0;">Data already available.</div>
<div class="a" style="left:270px;top:658px;width:1613px;height:1px;background:#dedede;"></div>
<div class="a" style="left:282px;top:633.00px;width:18px;height:18px;background:#fff;border:1px solid #d9d9d9"></div>
<div class="a" style="left:351px;top:634.50px;font-size:13px;color:#2e2e2e;font-weight:normal;transform:scaleX(0.932);transform-origin:0 0;">192.188.1.2</div>
<div class="a" style="left:547px;top:634.50px;font-size:13px;color:#2e2e2e;font-weight:normal;transform:scaleX(0.904);transform-origin:0 0;">Cisco Device</div>
<div class="a" style="left:710px;top:634.50px;font-size:13px;color:#2e2e2e;font-weight:normal;transform:scaleX(0.943);transform-origin:0 0;">2022-06-14 11:00:00</div>
<div class="a" style="left:938px;top:634.50px;font-size:13px;color:#2e2e2e;font-weight:normal;transform:scaleX(0.943);transform-origin:0 0;">2022-06-14 11:00:00</div>
<div class="a" style="left:1166px;top:634.50px;font-size:13px;color:#2e2e2e;font-weight:normal;transform:scaleX(0.93);transform-origin:0 0;">1.07 MB</div>
<svg class="a" style="left:1299px;top:636.30px;" width="16" height="12" viewBox="0 0 16 12"><path d="M8.1 0 L14.9 11.5 H1.1 Z" fill="#e44d35"/><rect x="7.1" y="3.7" width="2" height="1.8" fill="#fff"/><rect x="7.1" y="6.7" width="2" height="3.9" fill="#fff"/></svg>
<div class="a" style="left:1321px;top:634.30px;font-size:13px;color:#2e2e2e;font-weight:normal;transform:scaleX(0.923);transform-origin:0 0;">Access Denied</div>
<svg class="a" style="left:1406px;top:634.00px;" width="15" height="14" viewBox="0 0 15 14"><path d="M6 2 H2.1 V11.8 H12.9 V9" fill="none" stroke="#2f3b44" stroke-width="1.8"/><path d="M8.6 1.1 H13.8 V6.3 Z" fill="#2f3b44"/><path d="M7.3 7.6 L12.2 2.7" stroke="#2f3b44" stroke-width="1.8"/></svg>
<div class="a" style="left:1543px;top:634.50px;font-size:13px;color:#2e2e2e;font-weight:normal;transform:scaleX(0.955);transform-origin:0 0;">Not Loaded</div>
<div class="a" style="left:270px;top:692px;width:1613px;height:1px;background:#dedede;"></div>
<div class="a" style="left:282px;top:667.00px;width:18px;height:18px;background:#fff;border:1px solid #d9d9d9"></div>
<div class="a" style="left:351px;top:668.50px;font-size:13px;color:#2e2e2e;font-weight:normal;transform:scaleX(0.932);transform-origin:0 0;">192.200.1.2</div>
<div class="a" style="left:547px;top:668.50px;font-size:13px;color:#2e2e2e;font-weight:normal;transform:scaleX(0.904);transform-origin:0 0;">Cisco Device</div>
<div class="a" style="left:710px;top:668.50px;font-size:13px;color:#2e2e2e;font-weight:normal;transform:scaleX(0.943);transform-origin:0 0;">2022-06-14 11:00:00</div>
<div class="a" style="left:938px;top:668.50px;font-size:13px;color:#2e2e2e;font-weight:normal;transform:scaleX(0.943);transform-origin:0 0;">2022-06-14 11:00:00</div>
<div class="a" style="left:1166px;top:668.50px;font-size:13px;color:#2e2e2e;font-weight:normal;transform:scaleX(0.93);transform-origin:0 0;">273.71 KB</div>
<svg class="a" style="left:1301px;top:669.50px;" width="13" height="12" viewBox="0 0 13 12"><circle cx="6.5" cy="5.9" r="5.55" fill="#7cb65a"/><path d="M3.1 6 L5.4 8.1 L9.8 3.8" fill="none" stroke="#f4f4f4" stroke-width="1.15"/></svg>
<div class="a" style="left:1321px;top:668.30px;font-size:13px;color:#2e2e2e;font-weight:normal;transform:scaleX(0.923);transform-origin:0 0;">File available</div>
<div class="a" style="left:1543px;top:668.50px;font-size:13px;color:#2e2e2e;font-weight:normal;transform:scaleX(0.955);transform-origin:0 0;">Not Loaded</div>
<div class="a" style="left:270px;top:726px;width:1613px;height:1px;background:#dedede;"></div>
<div class="a" style="left:282px;top:701.00px;width:18px;height:18px;background:#fff;border:1px solid #d9d9d9"></div>
<div class="a" style="left:351px;top:702.50px;font-size:13px;color:#9a9a9a;font-weight:normal;transform:scaleX(0.932);transform-origin:0 0;">192.168.1.2</div>
<div class="a" style="left:547px;top:702.50px;font-size:13px;color:#9a9a9a;font-weight:normal;transform:scaleX(0.904);transform-origin:0 0;">Cisco Device</div>
<div class="a" style="left:710px;top:702.50px;font-size:13px;color:#9a9a9a;font-weight:normal;transform:scaleX(0.943);transform-origin:0 0;">2024-03-26 10:40:19</div>
<div class="a" style="left:938px;top:702.50px;font-size:13px;color:#9a9a9a;font-weight:normal;transform:scaleX(0.943);transform-origin:0 0;">2024-03-26 11:00:00</div>
<div class="a" style="left:1166px;top:702.50px;font-size:13px;color:#9a9a9a;font-weight:normal;transform:scaleX(0.93);transform-origin:0 0;">666.30 KB</div>
<svg class="a" style="left:1301px;top:703.50px;" width="13" height="12" viewBox="0 0 13 12"><circle cx="6.5" cy="5.9" r="5.55" fill="#7cb65a"/><path d="M3.1 6 L5.4 8.1 L9.8 3.8" fill="none" stroke="#f4f4f4" stroke-width="1.15"/></svg>
<div class="a" style="left:1321px;top:702.30px;font-size:13px;color:#9a9a9a;font-weight:normal;transform:scaleX(0.923);transform-origin:0 0;">File available</div>
<div class="a" style="left:1543px;top:702.50px;font-size:13px;color:#9a9a9a;font-weight:normal;transform:scaleX(0.955);transform-origin:0 0;">Data already available.</div>
<div class="a" style="left:270px;top:759px;width:1613px;height:1px;background:#dedede;"></div>
<div class="a" style="left:282px;top:735.00px;width:18px;height:18px;background:#fff;border:1px solid #d9d9d9"></div>
<div class="a" style="left:351px;top:736.00px;font-size:13px;color:#2e2e2e;font-weight:normal;transform:scaleX(0.932);transform-origin:0 0;">192.188.1.2</div>
<div class="a" style="left:547px;top:736.00px;font-size:13px;color:#2e2e2e;font-weight:normal;transform:scaleX(0.904);transform-origin:0 0;">Cisco Device</div>
<div class="a" style="left:710px;top:736.00px;font-size:13px;color:#2e2e2e;font-weight:normal;transform:scaleX(0.943);transform-origin:0 0;">2022-06-14 11:00:00</div>
<div class="a" style="left:938px;top:736.00px;font-size:13px;color:#2e2e2e;font-weight:normal;transform:scaleX(0.943);transform-origin:0 0;">2022-06-14 11:00:00</div>
<div class="a" style="left:1166px;top:736.00px;font-size:13px;color:#2e2e2e;font-weight:normal;transform:scaleX(0.93);transform-origin:0 0;">1.07 MB</div>
<svg class="a" style="left:1301px;top:737.00px;" width="13" height="12" viewBox="0 0 13 12"><circle cx="6.5" cy="5.9" r="5.55" fill="#7cb65a"/><path d="M3.1 6 L5.4 8.1 L9.8 3.8" fill="none" stroke="#f4f4f4" stroke-width="1.15"/></svg>
<div class="a" style="left:1321px;top:735.80px;font-size:13px;color:#2e2e2e;font-weight:normal;transform:scaleX(0.923);transform-origin:0 0;">File available</div>
<div class="a" style="left:1543px;top:736.00px;font-size:13px;color:#2e2e2e;font-weight:normal;transform:scaleX(0.955);transform-origin:0 0;">Not Loaded</div>
<div class="a" style="left:270px;top:793px;width:1613px;height:1px;background:#dedede;"></div>
<div class="a" style="left:282px;top:768.00px;width:18px;height:18px;background:#fff;border:1px solid #d9d9d9"></div>
<div class="a" style="left:351px;top:769.50px;font-size:13px;color:#2e2e2e;font-weight:normal;transform:scaleX(0.932);transform-origin:0 0;">192.200.1.2</div>
<div class="a" style="left:547px;top:769.50px;font-size:13px;color:#2e2e2e;font-weight:normal;transform:scaleX(0.904);transform-origin:0 0;">Cisco Device</div>
<div class="a" style="left:710px;top:769.50px;font-size:13px;color:#2e2e2e;font-weight:normal;transform:scaleX(0.943);transform-origin:0 0;">2022-06-14 11:00:00</div>
<div class="a" style="left:938px;top:769.50px;font-size:13px;color:#2e2e2e;font-weight:normal;transform:scaleX(0.943);transform-origin:0 0;">2022-06-14 11:00:00</div>
<div class="a" style="left:1166px;top:769.50px;font-size:13px;color:#2e2e2e;font-weight:normal;transform:scaleX(0.93);transform-origin:0 0;">273.71 KB</div>
<svg class="a" style="left:1301px;top:770.50px;" width="13" height="12" viewBox="0 0 13 12"><circle cx="6.5" cy="5.9" r="5.55" fill="#7cb65a"/><path d="M3.1 6 L5.4 8.1 L9.8 3.8" fill="none" stroke="#f4f4f4" stroke-width="1.15"/></svg>
<div class="a" style="left:1321px;top:769.30px;font-size:13px;color:#2e2e2e;font-weight:normal;transform:scaleX(0.923);transform-origin:0 0;">File available</div>
<div class="a" style="left:1543px;top:769.50px;font-size:13px;color:#2e2e2e;font-weight:normal;transform:scaleX(0.955);transform-origin:0 0;">Not Loaded</div>
<div class="a" style="left:270px;top:827px;width:1613px;height:1px;background:#dedede;"></div>
<div class="a" style="left:282px;top:802.00px;width:18px;height:18px;background:#fff;border:1px solid #d9d9d9"></div>
<div class="a" style="left:351px;top:803.50px;font-size:13px;color:#2e2e2e;font-weight:normal;transform:scaleX(0.932);transform-origin:0 0;">192.188.1.2</div>
<div class="a" style="left:547px;top:803.50px;font-size:13px;color:#2e2e2e;font-weight:normal;transform:scaleX(0.904);transform-origin:0 0;">Cisco Device</div>
<div class="a" style="left:710px;top:803.50px;font-size:13px;color:#2e2e2e;font-weight:normal;transform:scaleX(0.943);transform-origin:0 0;">2022-06-14 11:00:00</div>
<div class="a" style="left:938px;top:803.50px;font-size:13px;color:#2e2e2e;font-weight:normal;transform:scaleX(0.943);transform-origin:0 0;">2022-06-14 11:00:00</div>
<div class="a" style="left:1166px;top:803.50px;font-size:13px;color:#2e2e2e;font-weight:normal;transform:scaleX(0.93);transform-origin:0 0;">1.07 MB</div>
<svg class="a" style="left:1299px;top:805.30px;" width="16" height="12" viewBox="0 0 16 12"><path d="M8.1 0 L14.9 11.5 H1.1 Z" fill="#e44d35"/><rect x="7.1" y="3.7" width="2" height="1.8" fill="#fff"/><rect x="7.1" y="6.7" width="2" height="3.9" fill="#fff"/></svg>
<div class="a" style="left:1321px;top:803.30px;font-size:13px;color:#2e2e2e;font-weight:normal;transform:scaleX(0.923);transform-origin:0 0;">Connectivity Failed</div>
<div class="a" style="left:1543px;top:803.50px;font-size:13px;color:#2e2e2e;font-weight:normal;transform:scaleX(0.955);transform-origin:0 0;">Not Loaded</div>
<div class="a" style="left:270px;top:861px;width:1613px;height:1px;background:#dedede;"></div>
<div class="a" style="left:282px;top:836.00px;width:18px;height:18px;background:#fff;border:1px solid #d9d9d9"></div>
<div class="a" style="left:351px;top:837.50px;font-size:13px;color:#2e2e2e;font-weight:normal;transform:scaleX(0.932);transform-origin:0 0;">192.200.1.2</div>
<div class="a" style="left:547px;top:837.50px;font-size:13px;color:#2e2e2e;font-weight:normal;transform:scaleX(0.904);transform-origin:0 0;">Cisco Device</div>
<div class="a" style="left:710px;top:837.50px;font-size:13px;color:#2e2e2e;font-weight:normal;transform:scaleX(0.943);transform-origin:0 0;">2022-06-14 11:00:00</div>
<div class="a" style="left:938px;top:837.50px;font-size:13px;color:#2e2e2e;font-weight:normal;transform:scaleX(0.943);transform-origin:0 0;">2022-06-14 11:00:00</div>
<div class="a" style="left:1166px;top:837.50px;font-size:13px;color:#2e2e2e;font-weight:normal;transform:scaleX(0.93);transform-origin:0 0;">273.71 KB</div>
<svg class="a" style="left:1301px;top:838.50px;" width="13" height="12" viewBox="0 0 13 12"><circle cx="6.5" cy="5.9" r="5.55" fill="#7cb65a"/><path d="M3.1 6 L5.4 8.1 L9.8 3.8" fill="none" stroke="#f4f4f4" stroke-width="1.15"/></svg>
<div class="a" style="left:1321px;top:837.30px;font-size:13px;color:#2e2e2e;font-weight:normal;transform:scaleX(0.923);transform-origin:0 0;">File available</div>
<div class="a" style="left:1543px;top:837.50px;font-size:13px;color:#2e2e2e;font-weight:normal;transform:scaleX(0.955);transform-origin:0 0;">Not Loaded</div>
<div class="a" style="left:270px;top:894px;width:1613px;height:1px;background:#dedede;"></div>
<div class="a" style="left:282px;top:870.00px;width:18px;height:18px;background:#fff;border:1px solid #d9d9d9"></div>
<div class="a" style="left:351px;top:871.00px;font-size:13px;color:#9a9a9a;font-weight:normal;transform:scaleX(0.932);transform-origin:0 0;">192.168.1.2</div>
<div class="a" style="left:547px;top:871.00px;font-size:13px;color:#9a9a9a;font-weight:normal;transform:scaleX(0.904);transform-origin:0 0;">Cisco Device</div>
<div class="a" style="left:710px;top:871.00px;font-size:13px;color:#9a9a9a;font-weight:normal;transform:scaleX(0.943);transform-origin:0 0;">2024-03-26 10:40:19</div>
<div class="a" style="left:938px;top:871.00px;font-size:13px;color:#9a9a9a;font-weight:normal;transform:scaleX(0.943);transform-origin:0 0;">2024-03-26 11:00:00</div>
<div class="a" style="left:1166px;top:871.00px;font-size:13px;color:#9a9a9a;font-weight:normal;transform:scaleX(0.93);transform-origin:0 0;">666.30 KB</div>
<svg class="a" style="left:1301px;top:872.00px;" width="13" height="12" viewBox="0 0 13 12"><circle cx="6.5" cy="5.9" r="5.55" fill="#7cb65a"/><path d="M3.1 6 L5.4 8.1 L9.8 3.8" fill="none" stroke="#f4f4f4" stroke-width="1.15"/></svg>
<div class="a" style="left:1321px;top:870.80px;font-size:13px;color:#9a9a9a;font-weight:normal;transform:scaleX(0.923);transform-origin:0 0;">File available</div>
<div class="a" style="left:1543px;top:871.00px;font-size:13px;color:#9a9a9a;font-weight:normal;transform:scaleX(0.955);transform-origin:0 0;">Data already available.</div>
<div class="a" style="left:270px;top:928px;width:1613px;height:1px;background:#dedede;"></div>
<div class="a" style="left:282px;top:903.00px;width:18px;height:18px;background:#fff;border:1px solid #d9d9d9"></div>
<div class="a" style="left:351px;top:904.50px;font-size:13px;color:#2e2e2e;font-weight:normal;transform:scaleX(0.932);transform-origin:0 0;">192.188.1.2</div>
<div class="a" style="left:547px;top:904.50px;font-size:13px;color:#2e2e2e;font-weight:normal;transform:scaleX(0.904);transform-origin:0 0;">Cisco Device</div>
<div class="a" style="left:710px;top:904.50px;font-size:13px;color:#2e2e2e;font-weight:normal;transform:scaleX(0.943);transform-origin:0 0;">2022-06-14 11:00:00</div>
<div class="a" style="left:938px;top:904.50px;font-size:13px;color:#2e2e2e;font-weight:normal;transform:scaleX(0.943);transform-origin:0 0;">2022-06-14 11:00:00</div>
<div class="a" style="left:1166px;top:904.50px;font-size:13px;color:#2e2e2e;font-weight:normal;transform:scaleX(0.93);transform-origin:0 0;">1.07 MB</div>
<svg class="a" style="left:1301px;top:905.50px;" width="13" height="12" viewBox="0 0 13 12"><circle cx="6.5" cy="5.9" r="5.55" fill="#7cb65a"/><path d="M3.1 6 L5.4 8.1 L9.8 3.8" fill="none" stroke="#f4f4f4" stroke-width="1.15"/></svg>
<div class="a" style="left:1321px;top:904.30px;font-size:13px;color:#2e2e2e;font-weight:normal;transform:scaleX(0.923);transform-origin:0 0;">File available</div>
<div class="a" style="left:1543px;top:904.50px;font-size:13px;color:#2e2e2e;font-weight:normal;transform:scaleX(0.955);transform-origin:0 0;">Not Loaded</div>
<div class="a" style="left:1865px;top:893px;width:33px;height:29px;background:#465057;"></div>
<svg class="a" style="left:1874px;top:902px;" width="16" height="15" viewBox="0 0 16 15"><path d="M0.8 0.8 H14.6 V10.6 H6 L3 14 V10.6 H0.8 Z" fill="none" stroke="#fff" stroke-width="1.1"/><path d="M4 4.6 H11 M4 7.2 H11" stroke="#e8e8e8" stroke-width="1"/></svg>
</body></html>
